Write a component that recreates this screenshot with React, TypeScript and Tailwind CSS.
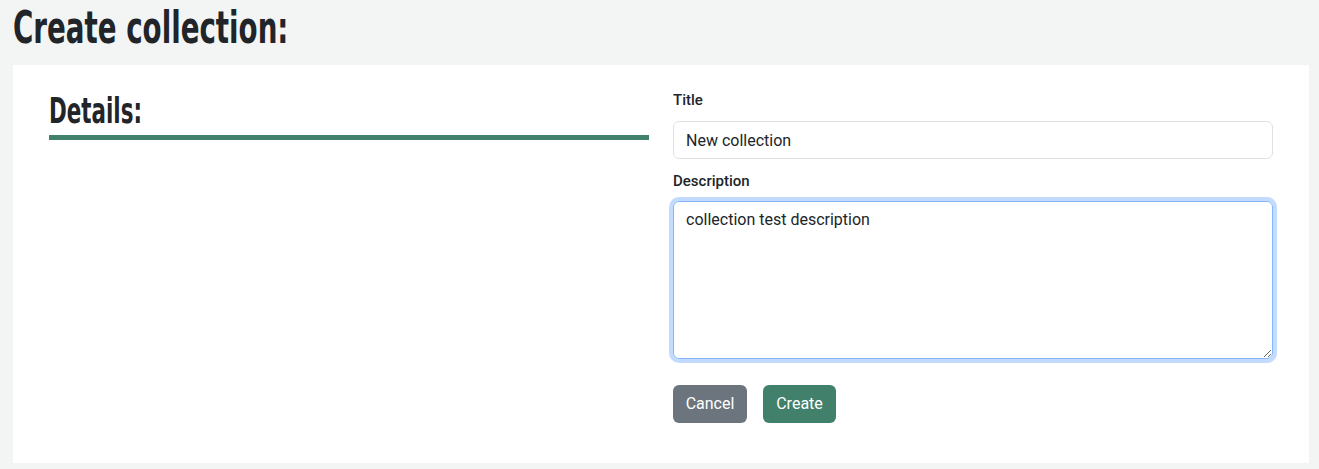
import React from "react";

export default function App() {
  return (
    <div className="min-h-[469px] bg-[#f3f4f4] text-[#212529]" style={{ fontFamily: "Roboto, 'Liberation Sans', sans-serif" }}>
      <div className="pl-[13px] pr-[10px]">
        <h1 className="h-[65px] flex items-start pt-[2px]">
          <span
            className="inline-block origin-left scale-x-[0.70] text-[44px] leading-[52px] font-bold whitespace-nowrap"
            style={{ fontFamily: "'DejaVu Sans Condensed', 'DejaVu Sans', sans-serif" }}
          >
            Create collection:
          </span>
        </h1>
        <div className="bg-white h-[398px] px-[36px] flex gap-[24px]">
          <div className="w-[600px] shrink-0">
            <h2 className="pt-[26px] h-[70px]">
              <span
                className="inline-block origin-left scale-x-[0.68] text-[35px] leading-[40px] font-bold whitespace-nowrap"
                style={{ fontFamily: "'DejaVu Sans Condensed', 'DejaVu Sans', sans-serif" }}
              >
                Details:
              </span>
            </h2>
            <div className="h-[5px] bg-[#41806b]" />
          </div>
          <div className="w-[600px] shrink-0 pt-[23px]">
            <label className="block text-[15px] font-medium leading-[24px] mb-[9px]">Title</label>
            <input
              className="block w-full h-[38px] px-[12px] border border-[#dee2e6] rounded-[6px] text-[16px] text-[#212529] outline-none"
              defaultValue="New collection"
            />
            <label className="block text-[15px] font-medium leading-[24px] mt-[10px] mb-[8px]">Description</label>
            <textarea
              className="block w-full h-[158px] px-[12px] py-[6px] border border-[#86b7fe] rounded-[6px] text-[16px] leading-[24px] text-[#212529] outline-none shadow-[0_0_0_4px_rgba(13,110,253,0.25)]"
              defaultValue="collection test description"
            />
            <div className="flex gap-[16px] mt-[26px]">
              <button className="h-[38px] w-[74px] rounded-[6px] bg-[#6c757d] text-white text-[16px]">Cancel</button>
              <button className="h-[38px] w-[73px] rounded-[6px] bg-[#41806b] text-white text-[16px]">Create</button>
            </div>
          </div>
        </div>
      </div>
    </div>
  );
}
